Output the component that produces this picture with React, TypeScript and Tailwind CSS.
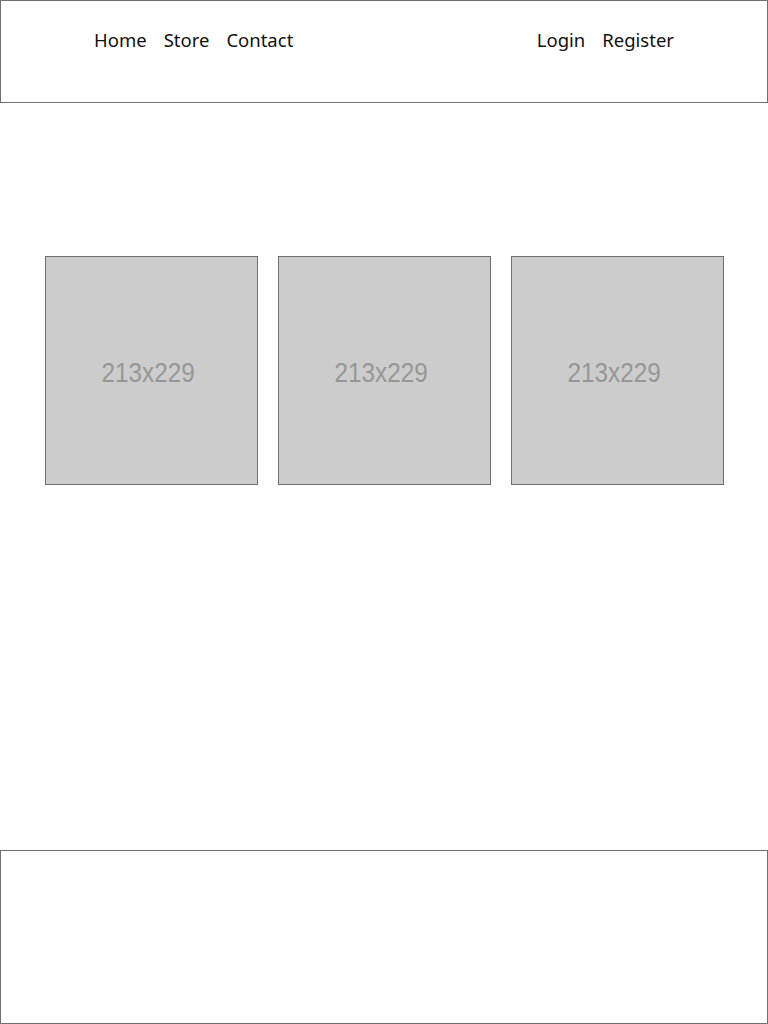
const navLeft = ['Home', 'Store', 'Contact'];
const navRight = ['Login', 'Register'];

function Placeholder() {
  return (
    <div className="w-[213px] h-[229px] bg-[#cccccc] border border-[#707070] flex items-center justify-center">
      <span className="inline-block scale-x-[0.9] font-['Liberation_Sans',Arial,sans-serif] text-[27px] text-[#969696] pt-[6px] pr-[6px]">213x229</span>
    </div>
  );
}

export default function App() {
  return (
    <div className="w-[768px] h-[1024px] bg-white flex flex-col font-['Noto_Sans',sans-serif]">
      {/* Header */}
      <header className="h-[103px] border border-[#707070] flex justify-between px-[93px] pt-[25px]">
        <nav className="flex gap-[17px] text-[18.5px] leading-[28px] text-[#111]">
          {navLeft.map((item) => (
            <a key={item} href="#">{item}</a>
          ))}
        </nav>
        <nav className="flex gap-[17px] text-[18.5px] leading-[28px] text-[#111]">
          {navRight.map((item) => (
            <a key={item} href="#">{item}</a>
          ))}
        </nav>
      </header>

      {/* Gallery */}
      <main className="h-[747px] flex justify-center gap-[20px] pt-[153px]">
        <Placeholder />
        <Placeholder />
        <Placeholder />
      </main>

      {/* Footer */}
      <footer className="h-[174px] border border-[#707070]" />
    </div>
  );
}
